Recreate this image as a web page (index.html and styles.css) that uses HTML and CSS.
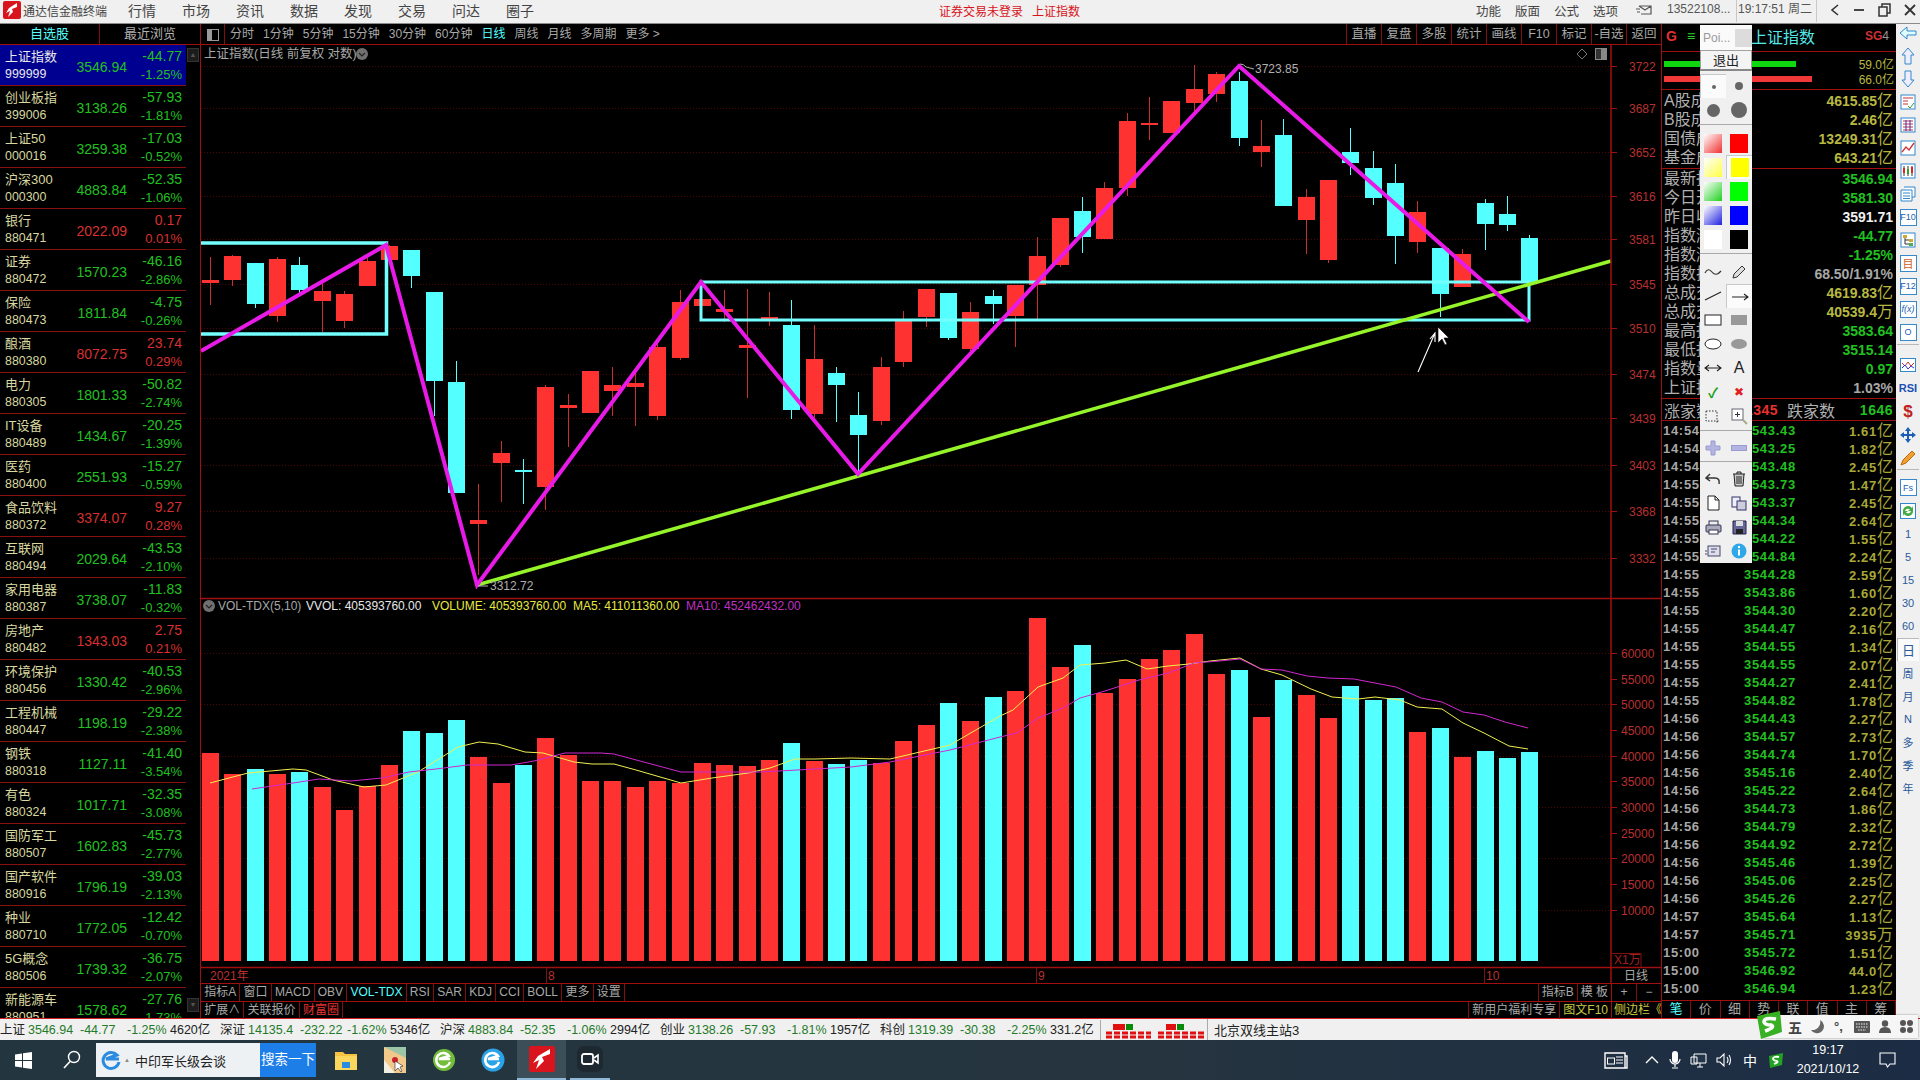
FILE: index.html
```html
<!DOCTYPE html>
<html lang="zh-CN">
<head>
    <meta charset="UTF-8">
    <title>通达信金融终端</title>
    <link rel="stylesheet" href="styles.css">
</head>
<body>
<div class="app">

    <!-- Title bar -->
    <div class="titlebar">
        <svg class="logo" width="18" height="18" viewBox="0 0 18 18"><rect width="18" height="18" rx="2" fill="#d8141c"/><path d="M14 2 L6 7 L3 12 L7 10 L5 16 L10 11 L9 8 L14 6 Z" fill="#fff"/></svg>
        <span class="app-name">通达信金融终端</span>
        <div class="menu">
            <span>行情</span><span>市场</span><span>资讯</span><span>数据</span><span>发现</span><span>交易</span><span>问达</span><span>圈子</span>
        </div>
        <div class="login-note"><span>证券交易未登录</span><span>上证指数</span></div>
        <div class="menu menu-right">
            <span>功能</span><span>版面</span><span>公式</span><span>选项</span>
        </div>
        <svg class="mail" width="16" height="12" viewBox="0 0 16 12"><path d="M3 2 H15 V10 H5 M3 2 L9 6 L15 2 M0 5 H4 M1 8 H4" fill="none" stroke="#555" stroke-width="1.2"/></svg>
        <span class="account">13522108...</span>
        <span class="clock">19:17:51 周二</span>
        <div class="win-btns">
            <svg width="10" height="14" viewBox="0 0 10 14"><path d="M8 2 L2 7 L8 12" fill="none" stroke="#333" stroke-width="1.6"/></svg>
            <svg width="12" height="14" viewBox="0 0 12 14"><path d="M1 7 H11" stroke="#333" stroke-width="1.8"/></svg>
            <svg width="13" height="14" viewBox="0 0 13 14"><path d="M1 4 H9 V13 H1 Z M4 4 V1 H12 V10 H9" fill="none" stroke="#333" stroke-width="1.5"/></svg>
            <svg width="12" height="14" viewBox="0 0 12 14"><path d="M1 2 L11 12 M11 2 L1 12" stroke="#333" stroke-width="1.8"/></svg>
        </div>
    </div>

    <div class="main">

        <!-- Stock list -->
        <div class="left">
            <div class="left-tabs"><span class="active">自选股</span><span>最近浏览</span></div>
            <div class="left-body">
                <div class="stock-list" id="stock-list"></div>
                <div class="scrollbar">
                    <div class="scroll-btn">▲</div>
                    <div class="scroll-btn">▼</div>
                </div>
            </div>
        </div>

        <!-- Chart area -->
        <div class="center">
            <div class="toolbar">
                <div class="period">
                    <span class="panel-icon"><svg width="12" height="12" viewBox="0 0 12 12"><rect x="0.5" y="0.5" width="11" height="11" fill="none" stroke="#999"/><rect x="1" y="1" width="4" height="10" fill="#999"/></svg></span>
                    <span>分时</span><span>1分钟</span><span>5分钟</span><span>15分钟</span><span>30分钟</span><span>60分钟</span><span class="active">日线</span><span>周线</span><span>月线</span><span>多周期</span><span>更多 &gt;</span>
                </div>
                <div class="tools">
                    <span>直播</span><span>复盘</span><span>多股</span><span>统计</span><span>画线</span><span>F10</span><span>标记</span><span>-自选</span><span>返回</span>
                </div>
            </div>

            <svg class="chart" id="chart" width="1460" height="938" viewBox="201 45 1460 938"></svg>

            <div class="tab-row">
                <div class="tab-group">
                    <span>指标A</span><span>窗口</span><span>MACD</span><span>OBV</span><span class="active">VOL-TDX</span><span>RSI</span><span>SAR</span><span>KDJ</span><span>CCI</span><span>BOLL</span><span>更多</span><span>设置</span>
                </div>
                <div class="tab-end">
                    <span>指标B</span><span>模 板</span>
                    <div class="zoom-btns"><span>+</span><span>−</span></div>
                </div>
            </div>
            <div class="tab-row tab-row-last">
                <div class="tab-group">
                    <span>扩展∧</span><span>关联报价</span><span class="hot">财富圈</span>
                </div>
                <div class="tab-end promo">
                    <span>新用户福利专享</span><span class="gold">图文F10</span><span class="gold side-toggle">侧边栏《</span>
                </div>
            </div>
        </div>

        <!-- Quote panel -->
        <div class="right">
            <div class="quote-head">
                <span class="g">G</span><span class="bars">≡</span><span class="quote-name">上证指数</span><span class="sg">SG<i>4</i></span>
            </div>
            <div class="flow">
                <div class="flow-row"><div class="flow-bar green"></div><span>59.0亿</span></div>
                <div class="flow-row"><div class="flow-bar red"></div><span>66.0亿</span></div>
            </div>
            <div class="quote-rows" id="quote-a"></div>
            <div class="quote-rows quote-rows-b" id="quote-b"></div>
            <div class="updown">
                <span>涨家数</span><b class="up">1345</b><span>跌家数</span><b class="down">1646</b>
            </div>
            <div class="ticks" id="ticks"></div>
            <div class="right-tabs">
                <span class="active">笔</span><span>价</span><span>细</span><span>势</span><span>联</span><span>值</span><span>主</span><span>筹</span>
            </div>
        </div>

        <!-- Side icon strip -->
        <div class="side">
            <div class="side-list">
                <span><svg width="18" height="14" viewBox="0 0 18 14"><path d="M8 1 L1 7 L8 13 V9 H17 V5 H8 Z" fill="#dff" stroke="#38c"/></svg></span>
                <span><svg width="14" height="18" viewBox="0 0 14 18"><path d="M7 1 L1 8 H4 V17 H10 V8 H13 Z" fill="#eef" stroke="#38c"/></svg></span>
                <span><svg width="14" height="18" viewBox="0 0 14 18"><path d="M7 17 L1 10 H4 V1 H10 V10 H13 Z" fill="#eef" stroke="#38c"/></svg></span>
                <span><svg width="16" height="16" viewBox="0 0 16 16"><rect x="1" y="1" width="14" height="14" fill="#fff" stroke="#38c"/><path d="M3 4 H13 M3 7 H8 M3 10 H8" stroke="#c33"/><path d="M8 12 L10 14 L14 9" fill="none" stroke="#393"/></svg></span>
                <span><svg width="16" height="16" viewBox="0 0 16 16"><rect x="1" y="1" width="14" height="14" fill="#fff" stroke="#38c"/><path d="M3 4 H13 M3 7 H13 M3 10 H13 M3 13 H13" stroke="#c33"/><path d="M6 3 V14 M10 3 V14" stroke="#33c"/></svg></span>
                <span><svg width="16" height="16" viewBox="0 0 16 16"><rect x="1" y="1" width="14" height="14" fill="#fff" stroke="#38c"/><path d="M2 12 L6 7 L9 10 L14 3" fill="none" stroke="#c33" stroke-width="1.3"/></svg></span>
                <span><svg width="16" height="16" viewBox="0 0 16 16"><rect x="1" y="1" width="14" height="14" fill="#fff" stroke="#38c"/><path d="M4 3 V13 M8 3 V13 M12 3 V13" stroke="#333"/><rect x="3" y="5" width="2" height="5" fill="#d22"/><rect x="7" y="6" width="2" height="5" fill="#2a2"/><rect x="11" y="4" width="2" height="6" fill="#d22"/></svg></span>
                <span><svg width="16" height="16" viewBox="0 0 16 16"><path d="M4 1 H15 V11 H12 M1 4 H12 V15 H1 Z" fill="#fff" stroke="#38c"/><path d="M3 7 H10 M3 10 H10 M3 12.5 H10" stroke="#38c"/></svg></span>
                <span class="boxed">F10</span>
                <span><svg width="16" height="16" viewBox="0 0 16 16"><rect x="1" y="1" width="14" height="14" fill="#fff" stroke="#38c"/><rect x="3" y="3" width="4" height="3" fill="#ca3"/><rect x="9" y="7" width="4" height="3" fill="#ca3"/><rect x="9" y="11" width="4" height="3" fill="#5a5"/><path d="M5 6 V12 H9 M5 8 H9" fill="none" stroke="#333"/></svg></span>
                <span class="boxed boxed-red">目</span>
                <span class="boxed">F12</span>
                <span class="boxed boxed-italic">f(x)</span>
                <span class="boxed">O</span>
                <span class="sep sep-a"></span>
                <span><svg width="16" height="14" viewBox="0 0 16 14"><rect x="0.5" y="0.5" width="15" height="13" fill="#fff" stroke="#38c"/><path d="M2 5 L5 8 L8 4 L11 8 L14 5" fill="none" stroke="#c33"/><path d="M2 10 L5 7 L8 11 L11 8 L14 10" fill="none" stroke="#33c"/></svg></span>
                <span class="rsi">RSI</span>
                <span class="dollar">$</span>
                <span><svg width="18" height="18" viewBox="0 0 18 18"><path d="M9 1 L12 5 H10 V8 H13 V6 L17 9 L13 12 V10 H10 V13 H12 L9 17 L6 13 H8 V10 H5 V12 L1 9 L5 6 V8 H8 V5 H6 Z" fill="#1a5fb4"/></svg></span>
                <span><svg width="18" height="18" viewBox="0 0 18 18"><path d="M2 16 L4 11 L13 2 L16 5 L7 14 Z" fill="#f0a030" stroke="#b86a10"/></svg></span>
                <span class="sep sep-b"></span>
                <span class="boxed">Fs</span>
                <span><svg width="16" height="16" viewBox="0 0 16 16"><rect x="0.5" y="0.5" width="15" height="15" fill="#fff" stroke="#38c"/><path d="M3 8 A5 5 0 0 1 12 5 L13 3 V8 H8 L10 6.5 A3 3 0 0 0 5 8 Z M13 8 A5 5 0 0 1 4 11 L3 13 V8 H8 L6 9.5 A3 3 0 0 0 11 8 Z" fill="#4a4"/></svg></span>
                <span class="period-btn">1</span><span class="period-btn">5</span><span class="period-btn">15</span><span class="period-btn">30</span><span class="period-btn">60</span>
                <span class="period-btn period-on">日</span><span class="period-btn">周</span><span class="period-btn">月</span><span class="period-btn">N</span><span class="period-btn">多</span><span class="period-btn">季</span><span class="period-btn">年</span>
            </div>
        </div>

        <!-- Floating drawing palette -->
        <div class="pen">
            <div class="pen-title"><span>Poi...</span><i></i></div>
            <div class="pen-exit">退出</div>
            <div class="pen-grid">
                <span class="pen-on"><b class="dot d1"></b></span><span><b class="dot d2"></b></span>
                <span><b class="dot d3"></b></span><span><b class="dot d4"></b></span>
            </div>
            <div class="pen-sep"></div>
            <div class="pen-grid">
                <span><b class="sw g-red"></b></span><span><b class="sw c-red"></b></span>
                <span><b class="sw g-yel"></b></span><span class="pen-on"><b class="sw c-yel"></b></span>
                <span><b class="sw g-grn"></b></span><span><b class="sw c-grn"></b></span>
                <span><b class="sw g-blu"></b></span><span><b class="sw c-blu"></b></span>
                <span><b class="sw c-wht"></b></span><span><b class="sw c-blk"></b></span>
            </div>
            <div class="pen-sep"></div>
            <div class="pen-grid">
                <span><svg width="18" height="12" viewBox="0 0 18 12"><path d="M1 7 Q4 1 8 6 T17 5" fill="none" stroke="#333" stroke-width="1.2"/></svg></span>
                <span><svg width="16" height="16" viewBox="0 0 16 16"><path d="M2 14 L3 10 L11 2 L14 5 L6 13 Z" fill="#ddd" stroke="#333"/></svg></span>
                <span><svg width="18" height="10" viewBox="0 0 18 10"><path d="M1 9 L17 1" stroke="#222" stroke-width="1.1"/></svg></span>
                <span class="pen-on"><svg width="18" height="10" viewBox="0 0 18 10"><path d="M1 5 H17 M13 2 L17 5 L13 8" fill="none" stroke="#222" stroke-width="1.1"/></svg></span>
                <span><svg width="18" height="12" viewBox="0 0 18 12"><rect x="1" y="1" width="16" height="10" fill="#fff" stroke="#222"/></svg></span>
                <span><b class="filled"></b></span>
                <span><svg width="18" height="12" viewBox="0 0 18 12"><ellipse cx="9" cy="6" rx="8" ry="5" fill="#fff" stroke="#222"/></svg></span>
                <span><b class="filled round"></b></span>
                <span><svg width="18" height="10" viewBox="0 0 18 10"><path d="M1 5 H17 M5 2 L1 5 L5 8 M13 2 L17 5 L13 8" fill="none" stroke="#222" stroke-width="1.1"/></svg></span>
                <span class="pen-a">A</span>
                <span class="ok">✓</span>
                <span class="no">✖</span>
                <span><svg width="18" height="18" viewBox="0 0 18 18"><path d="M2 4 H13 V16 M2 4 V14 H16" fill="none" stroke="#333" stroke-dasharray="1.5 1.5"/></svg></span>
                <span><svg width="18" height="18" viewBox="0 0 18 18"><rect x="2" y="2" width="11" height="11" fill="#fff" stroke="#667"/><path d="M7.5 5 V10 M5 7.5 H10" stroke="#333"/><path d="M13 13 L17 17" stroke="#aa8" stroke-width="2"/></svg></span>
            </div>
            <div class="pen-sep"></div>
            <div class="pen-grid pen-grid-short">
                <span><svg width="16" height="16" viewBox="0 0 16 16"><path d="M6 1 H10 V6 H15 V10 H10 V15 H6 V10 H1 V6 H6 Z" fill="#b4b4e0" stroke="#9a9ad0"/></svg></span>
                <span><svg width="16" height="6" viewBox="0 0 16 6"><rect x="0.5" y="0.5" width="15" height="5" fill="#b4b4e0" stroke="#9a9ad0"/></svg></span>
            </div>
            <div class="pen-sep pen-sep-last"></div>
            <div class="pen-grid">
                <span><svg width="16" height="12" viewBox="0 0 16 12"><path d="M5 1 L1 5 L5 8 M1 5 H10 Q15 5 14 11" fill="none" stroke="#333" stroke-width="1.4"/></svg></span>
                <span><svg width="14" height="16" viewBox="0 0 14 16"><path d="M1 3 H13 M5 3 V1 H9 V3 M2 3 L3 15 H11 L12 3 M5 5 V13 M7 5 V13 M9 5 V13" fill="#ccc" stroke="#222"/></svg></span>
                <span><svg width="13" height="16" viewBox="0 0 13 16"><path d="M1 1 H8 L12 5 V15 H1 Z M8 1 V5 H12" fill="#fff" stroke="#222"/></svg></span>
                <span><svg width="16" height="15" viewBox="0 0 16 15"><rect x="1" y="1" width="8" height="10" fill="#eef" stroke="#336"/><rect x="6" y="5" width="9" height="9" fill="#ccd" stroke="#336"/></svg></span>
                <span><svg width="17" height="15" viewBox="0 0 17 15"><rect x="4" y="1" width="9" height="5" fill="#eee" stroke="#335"/><rect x="1" y="5" width="15" height="7" rx="1" fill="#aab" stroke="#335"/><rect x="4" y="10" width="9" height="4" fill="#fff" stroke="#335"/></svg></span>
                <span><svg width="15" height="15" viewBox="0 0 15 15"><path d="M1 1 H14 V14 H1 Z" fill="#669" stroke="#224"/><rect x="4" y="1" width="7" height="5" fill="#ddd"/><rect x="4" y="9" width="7" height="5" fill="#222"/></svg></span>
                <span><svg width="16" height="12" viewBox="0 0 16 12"><rect x="3" y="1" width="12" height="10" fill="#dde" stroke="#446"/><path d="M6 4 H12 M6 7 H10 M0 9 H2 M0 6 H2" stroke="#446"/></svg></span>
                <span><svg width="16" height="16" viewBox="0 0 16 16"><circle cx="8" cy="8" r="7.5" fill="#2fa8e8"/><rect x="7" y="3" width="2" height="2" fill="#fff"/><rect x="7" y="6.5" width="2" height="6" fill="#fff"/></svg></span>
            </div>
        </div>
    </div>

    <!-- Index status bar -->
    <div class="statusbar">
        <div class="idx"><span>上证</span><em>3546.94</em><em>-44.77</em><em>-1.25%</em><span>4620亿</span></div>
        <div class="idx"><span>深证</span><em>14135.4</em><em>-232.22</em><em>-1.62%</em><span>5346亿</span></div>
        <div class="idx"><span>沪深</span><em>4883.84</em><em>-52.35</em><em>-1.06%</em><span>2994亿</span></div>
        <div class="idx"><span>创业</span><em>3138.26</em><em>-57.93</em><em>-1.81%</em><span>1957亿</span></div>
        <div class="idx idx-last"><span>科创</span><em>1319.39</em><em>-30.38</em><em>-2.25%</em><span>331.2亿</span></div>
        <div class="signal">
            <svg width="102" height="18" viewBox="0 0 102 18">
                <rect x="8" y="3" width="12" height="6" fill="#e01010"/><rect x="21" y="3" width="7" height="6" fill="#0a8a0a"/>
                <rect x="61" y="3" width="10" height="6" fill="#e01010"/><rect x="72" y="3" width="7" height="6" fill="#0a8a0a"/>
                <path d="M1 12 H46 M1 16 H46 M53 12 H100 M53 16 H100" stroke="#e01010" stroke-width="3" stroke-dasharray="6 2"/>
            </svg>
        </div>
        <span class="server">北京双线主站3</span>
    </div>

    <!-- Windows taskbar -->
    <div class="taskbar">
        <div class="task-left">
            <svg class="task-start" width="17" height="17" viewBox="0 0 17 17"><path d="M0 2.5 L7 1.5 V8 H0 Z M8 1.3 L17 0 V8 H8 Z M0 9 H7 V15.5 L0 14.5 Z M8 9 H17 V17 L8 15.7 Z" fill="#fff"/></svg>
            <svg class="task-search" width="18" height="20" viewBox="0 0 18 20"><circle cx="11" cy="7" r="5.5" fill="none" stroke="#fff" stroke-width="1.4"/><path d="M7 11.5 L1 18" stroke="#fff" stroke-width="1.6"/></svg>
            <div class="searchbox">
                <svg width="20" height="22" viewBox="0 0 20 22"><path d="M18 13 A8 8 0 1 1 16 6 L5 10 H18" fill="none" stroke="#2a8be0" stroke-width="3"/></svg>
                <i>▲</i>
                <span>中印军长级会谈</span>
                <b>搜索一下</b>
            </div>
            <div class="task-apps">
                <span><svg width="24" height="22" viewBox="0 0 24 22"><path d="M1 3 H9 L11 5 H23 V21 H1 Z" fill="#f5c242"/><rect x="1" y="7" width="22" height="14" fill="#fbd75e"/><rect x="8" y="13" width="8" height="6" fill="#2a8be0"/></svg></span>
                <span><svg width="24" height="28" viewBox="0 0 24 28"><path d="M1 1 H23 V27 H1 Z" fill="#f3c98b"/><path d="M1 1 L23 12 V1 Z" fill="#9bc7a6"/><path d="M1 14 L12 27 H1 Z" fill="#f0efe0"/><circle cx="12" cy="14" r="3" fill="#c7252b"/><path d="M12 15 V25 L15 22 L18 26 L19 25 L17 21 L20 20 Z" fill="#fff" stroke="#222" stroke-width="0.6"/></svg></span>
                <span><svg width="24" height="26" viewBox="0 0 24 26"><circle cx="12" cy="13" r="11" fill="#72be38"/><path d="M18 15 A7 7 0 1 1 17 9 L7 12 H18" fill="none" stroke="#fff" stroke-width="2.4"/></svg></span>
                <span><svg width="24" height="26" viewBox="0 0 24 26"><circle cx="12" cy="13" r="11.5" fill="#2aa3e8"/><path d="M18 15 A7 7 0 1 1 17 9 L7 12 H18" fill="none" stroke="#fff" stroke-width="2.6"/></svg></span>
                <span class="task-on"><svg width="26" height="26" viewBox="0 0 26 26"><rect width="26" height="26" rx="2" fill="#d8141c"/><path d="M21 3 L9 10 L4 17 L10 14 L7 23 L15 15 L13 11 L21 8 Z" fill="#fff"/></svg></span>
                <span class="task-open"><svg width="26" height="26" viewBox="0 0 26 26"><rect width="26" height="26" rx="7" fill="#1d2830"/><rect x="5" y="8" width="11" height="10" rx="2" fill="none" stroke="#fff" stroke-width="1.8"/><path d="M17 12 L21 9 V17 L17 14" fill="none" stroke="#fff" stroke-width="1.6"/></svg></span>
            </div>
        </div>
        <div class="tray">
            <svg width="24" height="17" viewBox="0 0 24 17"><path d="M1 1 H21 V16 H1 Z M21 4 H23 V16 H21" fill="none" stroke="#fff" stroke-width="1.4"/><rect x="3.5" y="6" width="7" height="6" fill="none" stroke="#fff"/><path d="M12 5 H19 M12 8 H19 M12 11 H19" stroke="#fff"/></svg>
            <svg class="tray-up" width="14" height="8" viewBox="0 0 14 8"><path d="M1 7 L7 1 L13 7" fill="none" stroke="#fff" stroke-width="1.3"/></svg>
            <svg width="12" height="18" viewBox="0 0 12 18"><rect x="3" y="0" width="6" height="12" rx="3" fill="#fff"/><path d="M1 8 A5 5 0 0 0 11 8 M6 13 V16 M3 17 H9" fill="none" stroke="#fff" stroke-width="1.2"/></svg>
            <svg width="17" height="16" viewBox="0 0 17 16"><path d="M4 2 H16 V11 H4 Z M1 5 H7 V12 H1 Z M7 15 H13 M10 11 V15" fill="#233548" stroke="#fff"/></svg>
            <svg width="17" height="14" viewBox="0 0 17 14"><path d="M1 5 H4 L8 1 V13 L4 9 H1 Z M11 4 Q13 7 11 10 M13 2 Q16 7 13 12" fill="none" stroke="#fff" stroke-width="1.1"/></svg>
            <span class="tray-ime">中</span>
            <svg class="tray-s" width="16" height="15" viewBox="0 0 16 15"><path d="M1 3 L15 0 L14 12 L2 15 Z" fill="#23a323"/><path d="M11 4 Q5 3 5 6 Q6 8 9 8 Q11 9 6 11" fill="none" stroke="#fff" stroke-width="1.8"/></svg>
            <div class="datetime"><span>19:17</span><span>2021/10/12</span></div>
            <svg class="notify" width="17" height="16" viewBox="0 0 17 16"><path d="M1 1 H16 V12 H11 L8.5 15 L7 12 H1 Z" fill="none" stroke="#fff" stroke-width="1.1"/></svg>
        </div>
    </div>

    <!-- IME floating bar -->
    <div class="ime">
        <svg class="ime-logo" width="28" height="28" viewBox="0 0 28 28"><path d="M2 5 L25 0 L27 21 L6 28 Z" fill="#37b024"/><path d="M21 8 Q9 6 9 11 Q10 14 16 14 Q21 16 10 20" fill="none" stroke="#fff" stroke-width="3.6"/></svg>
        <span class="ime-wu">五</span>
        <svg width="14" height="14" viewBox="0 0 14 14"><path d="M9 0 A7 7 0 1 1 0 10 A8 8 0 0 0 9 0 Z" fill="#666"/></svg>
        <span class="ime-punc">°,</span>
        <svg width="16" height="12" viewBox="0 0 16 12"><rect width="16" height="12" rx="1" fill="#555"/><path d="M2 3 H14 M2 6 H14 M4 9 H12" stroke="#eee" stroke-dasharray="1.5 1"/></svg>
        <svg width="12" height="13" viewBox="0 0 12 13"><circle cx="6" cy="3.5" r="3.2" fill="#555"/><path d="M0 13 Q0 7 6 7 Q12 7 12 13 Z" fill="#555"/></svg>
        <svg width="13" height="13" viewBox="0 0 13 13"><circle cx="3" cy="3" r="3" fill="#555"/><circle cx="10" cy="3" r="3" fill="#555"/><circle cx="3" cy="10" r="3" fill="#555"/><circle cx="10" cy="10" r="3" fill="#555"/></svg>
    </div>
</div>
<script src="app.js"></script>
</body>
</html>
```
FILE: styles.css
```css
* {
    box-sizing: border-box;
}

html, body {
    margin: 0;
    padding: 0;
    background-color: #000;
}

body {
    font-family: 'Liberation Sans', 'Noto Sans CJK SC', sans-serif;
    font-size: 12px;
    color: #b8b8b8;
    overflow: hidden;
}

i, em {
    font-style: normal;
}

.app {
    position: relative;
    width: 1920px;
    height: 1080px;
    display: flex;
    flex-direction: column;
    overflow: hidden;
}

/* Title bar */
.titlebar {
    height: 24px;
    flex: none;
    display: flex;
    align-items: center;
    background-color: #f0f0f0;
    border-bottom: 1px solid #8c8c8c;
    color: #444;
    padding-left: 3px;
    padding-bottom: 3px;
}

.app-name {
    margin-left: 2px;
    width: 105px;
    font-size: 12px;
}

.menu {
    display: flex;
    gap: 26px;
    font-size: 14px;
}

.login-note {
    margin-left: 405px;
    width: 537px;
    display: flex;
    gap: 9px;
    color: #d8141c;
    font-size: 12px;
}

.menu-right {
    gap: 14px;
    font-size: 12.5px;
    width: 149px;
}

.mail {
    margin-left: 11px;
}

.account {
    margin-left: 15px;
    width: 70px;
    color: #555;
    font-size: 12px;
    border-right: 1px solid #c8c8c8;
    height: 23px;
    line-height: 20px;
}

.clock {
    width: 80px;
    padding-left: 1px;
    color: #555;
    font-size: 12px;
    border-right: 1px solid #c8c8c8;
    height: 23px;
    line-height: 20px;
    white-space: nowrap;
    overflow: hidden;
}

.win-btns {
    display: flex;
    align-items: center;
    gap: 13px;
    margin-left: 13px;
}

/* Main row */
.main {
    position: relative;
    height: 995px;
    flex: none;
    display: flex;
    background-color: #000;
    border-bottom: 1px solid #d02020;
}

/* Left stock list */
.left {
    width: 201px;
    flex: none;
    display: flex;
    flex-direction: column;
    border-right: 1px solid #a01010;
}

.left-tabs {
    height: 21px;
    flex: none;
    display: flex;
    border-bottom: 1px solid #a01010;
    font-size: 13px;
    line-height: 20px;
}

.left-tabs span {
    flex: 1;
    text-align: center;
    color: #b0b0b0;
}

.left-tabs span:first-child {
    border-right: 1px solid #801010;
    flex: none;
    width: 100px;
}

.left-tabs .active {
    color: #54ffff;
}

.left-body {
    flex: 1;
    display: flex;
    min-height: 0;
}

.stock-list {
    width: 186px;
    flex: none;
    overflow: hidden;
}

.stock-row {
    height: 41px;
    display: flex;
    border-bottom: 1px solid #8a1010;
    padding: 3px 4px 0 5px;
}

.stock-row.selected {
    background-color: #000090;
}

.stock-row.selected .name,
.stock-row.selected .code {
    color: #e8e8e8;
}

.stock-id {
    width: 64px;
    flex: none;
    overflow: hidden;
    white-space: nowrap;
}

.name {
    height: 18px;
    line-height: 17px;
    font-size: 13px;
    color: #d8d8a0;
}

.code {
    height: 17px;
    line-height: 17px;
    font-size: 12.4px;
    color: #d8d8a0;
}

.price {
    width: 58px;
    flex: none;
    text-align: right;
    font-size: 14px;
    line-height: 39px;
    height: 37px;
}

.change {
    flex: 1;
    text-align: right;
}

.chg {
    height: 18px;
    line-height: 17px;
    font-size: 14px;
}

.pct {
    height: 17px;
    line-height: 17px;
    font-size: 13px;
}

.rise {
    color: #d83030;
}

.fall {
    color: #20c020;
}

.scrollbar {
    flex: 1;
    display: flex;
    flex-direction: column;
    justify-content: space-between;
    align-items: center;
    padding: 3px 0 6px;
}

.scroll-btn {
    width: 12px;
    height: 14px;
    background-color: #1c1c1c;
    border: 1px solid #333;
    color: #555;
    font-size: 7px;
    line-height: 12px;
    text-align: center;
}

/* Center column */
.center {
    width: 1461px;
    flex: none;
    display: flex;
    flex-direction: column;
    border-right: 1px solid #a01010;
}

.toolbar {
    height: 21px;
    flex: none;
    display: flex;
    justify-content: space-between;
    border-bottom: 1px solid #a01010;
    line-height: 20px;
}

.period {
    display: flex;
    gap: 9px;
    font-size: 12px;
    color: #a8a8a8;
}

.period .panel-icon {
    width: 24px;
    margin-right: -4px;
    padding: 3px 0 0 6px;
    border-right: 1px solid #801010;
    height: 20px;
}

.period .active {
    color: #54ffff;
}

.tools {
    display: flex;
    font-size: 12.5px;
    color: #a8a8a8;
    margin-right: 0;
}

.tools span {
    width: 35px;
    text-align: center;
    border-left: 1px solid #801010;
}

.chart {
    display: block;
    flex: none;
    background-color: #000;
}

.chart text {
    font-family: 'Liberation Sans', 'Noto Sans CJK SC', sans-serif;
}

.tab-row {
    height: 18px;
    flex: none;
    display: flex;
    justify-content: space-between;
    border-top: 1px solid #a01010;
    line-height: 16px;
}

.tab-row-last {
    height: 18px;
}

.tab-group {
    display: flex;
}

.tab-group span {
    padding: 0 3.2px;
    border-right: 1px solid #801010;
    color: #a8a8a8;
}

.tab-group .active {
    color: #54ffff;
}

.tab-group .hot {
    color: #e83030;
}

.tab-end {
    display: flex;
    align-items: stretch;
    color: #a8a8a8;
}

.tab-end > span {
    padding: 0 3px;
    border-left: 1px solid #801010;
}

.zoom-btns {
    display: flex;
    width: 50px;
    border-left: 1px solid #a01010;
}

.zoom-btns span {
    flex: 1;
    text-align: center;
}

.zoom-btns span + span {
    border-left: 1px solid #801010;
}

.promo .gold {
    color: #c8c840;
}

.promo .side-toggle {
    width: 50px;
    padding: 0 0 0 2px;
    border-left: 1px solid #a01010;
    white-space: nowrap;
    overflow: hidden;
}

/* Right quote panel */
.right {
    width: 234px;
    flex: none;
    display: flex;
    flex-direction: column;
    font-size: 14px;
}

.quote-head {
    height: 28px;
    flex: none;
    display: flex;
    align-items: center;
    padding: 0 0 3px 4px;
    border-bottom: 1px solid #a01010;
}

.quote-head .g {
    color: #e03030;
    font-weight: bold;
    font-size: 14px;
    width: 21px;
}

.quote-head .bars {
    color: #2ad02a;
    font-size: 14px;
    width: 64px;
}

.quote-name {
    color: #54e8e8;
    font-size: 16px;
    width: 114px;
    padding-left: 0;
}

.sg {
    color: #d03030;
    font-weight: bold;
    font-size: 12px;
}

.sg i {
    color: #999;
    font-weight: normal;
}

.flow {
    height: 38px;
    flex: none;
    padding-top: 4px;
    border-bottom: 1px solid #a01010;
}

.flow-row {
    height: 15px;
    display: flex;
    align-items: center;
    justify-content: space-between;
    padding: 0 2px;
    color: #b8b840;
    font-size: 12px;
}

.flow-bar {
    height: 6px;
}

.flow-bar.green {
    width: 132px;
    background-color: #10d810;
}

.flow-bar.red {
    width: 148px;
    background-color: #f03838;
}

.quote-rows {
    flex: none;
    padding: 1px 3px 1px 2px;
    border-bottom: 1px solid #a01010;
}

.quote-rows-b {
    padding-top: 0;
}

.quote-row {
    height: 19px;
    display: flex;
    align-items: center;
    justify-content: space-between;
}

.quote-row label {
    font-size: 16px;
    color: #b0b0b0;
    line-height: 19px;
}

.quote-row b {
    font-size: 14px;
    line-height: 19px;
}

.quote-row u {
    text-decoration: none;
    font-size: 16px;
    font-weight: normal;
}

.olive {
    color: #b8b840;
}

.lime {
    color: #20c020;
}

.white {
    color: #f0f0f0;
}

.grey {
    color: #a8a8a8;
}

.updown {
    height: 22px;
    flex: none;
    display: flex;
    align-items: center;
    padding: 0 3px 0 2px;
    font-size: 16px;
    color: #b0b0b0;
    border-bottom: 1px solid #a01010;
}

.updown .up {
    font-size: 14px;
    color: #e83030;
    margin-left: 33px;
    width: 42px;
    letter-spacing: 0.5px;
}

.updown .down {
    font-size: 14px;
    color: #20c020;
    margin-left: auto;
    letter-spacing: 0.5px;
}

.ticks {
    flex: 1;
    overflow: hidden;
    padding-top: 1px;
}

.tick {
    height: 18px;
    line-height: 18px;
    display: flex;
    padding-left: 1px;
    font-size: 13px;
    font-weight: bold;
    letter-spacing: 0.7px;
}

.tick .t {
    width: 81px;
    color: #a8a8a8;
}

.tick .p {
    width: 60px;
    color: #20c020;
}

.tick .v {
    width: 89px;
    text-align: right;
    color: #a8a838;
}

.tick u {
    text-decoration: none;
    font-size: 16px;
    font-weight: normal;
    letter-spacing: 0;
}

.right-tabs {
    height: 18px;
    flex: none;
    display: flex;
    border-top: 1px solid #a01010;
    line-height: 16px;
    font-size: 13px;
    color: #a8a8a8;
}

.right-tabs span {
    flex: 1;
    text-align: center;
    border-right: 1px solid #801010;
}

.right-tabs .active {
    color: #54ffff;
}

/* Side icon strip */
.side {
    flex: 1;
    background-color: #f0f0f0;
    overflow: hidden;
}

.side-list {
    display: flex;
    flex-direction: column;
    align-items: center;
    margin-top: -3px;
}

.side-list > span {
    height: 23.1px;
    display: flex;
    align-items: center;
    justify-content: center;
}

.side-list .boxed {
    width: 17px;
    height: 17px;
    margin: 3px 0;
    border: 1px solid #3888cc;
    background-color: #fff;
    color: #1a5fb4;
    font-size: 9px;
}

.side-list .boxed-red {
    color: #d06020;
    font-size: 11px;
}

.side-list .boxed-italic {
    font-style: italic;
}

.side-list .sep {
    width: 22px;
    border-top: 1px solid #b8b8b8;
}

.side-list .sep-a {
    height: 10px;
    margin-top: 0;
}

.side-list .sep-b {
    height: 7px;
    margin-top: 0;
}

.side-list .rsi {
    color: #1a4fb4;
    font-weight: bold;
    font-size: 11px;
}

.side-list .dollar {
    color: #c02020;
    font-weight: bold;
    font-size: 17px;
}

.side-list .period-btn {
    width: 22px;
    color: #2a5a9a;
    font-size: 11px;
}

.side-list .period-on {
    border-left: 1px solid #bbb;
    border-top: 1px solid #bbb;
    background-color: #fafafa;
    font-size: 13px;
}

/* Floating drawing palette */
.pen {
    position: absolute;
    left: 1700px;
    top: 1px;
    width: 52px;
    height: 538px;
    background-color: #f0f0f0;
}

.pen-title {
    height: 25px;
    display: flex;
    align-items: center;
    padding-left: 3px;
    background-color: #fafafa;
    color: #999;
}

.pen-title span {
    width: 32px;
}

.pen-title i {
    width: 17px;
    height: 18px;
    background-color: #dcdcdc;
}

.pen-exit {
    height: 21px;
    line-height: 19px;
    text-align: center;
    background-color: #f4f4f4;
    border: 1px solid #a0a0a0;
    border-bottom: 2px solid #888;
    color: #222;
    font-size: 13px;
    margin-bottom: 2px;
}

.pen-grid {
    display: grid;
    grid-template-columns: 26px 26px;
    grid-auto-rows: 24px;
    padding-top: 1px;
}

.pen-grid span {
    display: flex;
    align-items: center;
    justify-content: center;
}

.pen-grid .pen-on {
    background-color: #fbfbfb;
    border-left: 1px solid #c8c8c8;
    border-top: 1px solid #c8c8c8;
}

.pen-grid-short {
    grid-auto-rows: 22px;
}

.pen-sep {
    height: 6px;
    margin-top: 2px;
    border-top: 1px solid #aaa;
}

.pen-sep-last {
    height: 5px;
}

.dot {
    display: block;
    border-radius: 50%;
    background-color: #666;
}

.d1 { width: 4px; height: 4px; }
.d2 { width: 8px; height: 8px; }
.d3 { width: 13px; height: 13px; }
.d4 { width: 16px; height: 16px; }

.sw {
    display: block;
    width: 18px;
    height: 19px;
}

.g-red { background: linear-gradient(135deg, #fff, #f03030); }
.c-red { background-color: #ff0000; }
.g-yel { background: linear-gradient(135deg, #fff, #ffff40); }
.c-yel { background-color: #ffff00; }
.g-grn { background: linear-gradient(135deg, #fff, #20d020); }
.c-grn { background-color: #00ff00; }
.g-blu { background: linear-gradient(135deg, #fff, #2020e0); }
.c-blu { background-color: #0000ff; }
.c-wht { background-color: #fff; }
.c-blk { background-color: #000; }

.filled {
    display: block;
    width: 16px;
    height: 10px;
    background-color: #999;
}

.filled.round {
    border-radius: 50%;
}

.pen-grid .pen-a {
    color: #222;
    font-size: 16px;
}

.pen-grid .ok {
    color: #20a020;
    font-size: 14px;
    font-weight: bold;
}

.pen-grid .no {
    color: #e02020;
    font-size: 12px;
}

/* Status bar */
.statusbar {
    height: 21px;
    flex: none;
    display: flex;
    align-items: center;
    background-color: #f0f0f0;
    color: #222;
    font-size: 12.5px;
}

.idx {
    width: 220px;
    flex: none;
    display: grid;
    grid-template-columns: 28px 52px 47px 43px 1fr;
    white-space: nowrap;
    line-height: 20px;
}

.idx em {
    color: #1f7a2a;
}

.idx-last {
    width: 221px;
    border-right: 1px solid #aaa;
}

.signal {
    width: 107px;
    height: 21px;
    flex: none;
    padding: 2px 0 0 4px;
    border-right: 1px solid #aaa;
}

.server {
    margin-left: 6px;
    font-size: 13px;
}

/* Taskbar */
.taskbar {
    height: 40px;
    flex: none;
    display: flex;
    justify-content: space-between;
    align-items: stretch;
    background: linear-gradient(90deg, #233640, #25343f 60%, #1c2c44);
}

.task-left {
    display: flex;
    align-items: center;
}

.task-start {
    margin-left: 15px;
}

.task-search {
    margin-left: 31px;
}

.searchbox {
    margin-left: 15px;
    width: 220px;
    height: 34px;
    display: flex;
    align-items: center;
    background-color: #eef1f3;
    color: #222;
    font-size: 13px;
    padding-left: 5px;
}

.searchbox i {
    color: #888;
    font-size: 6px;
    margin: 0 5px 0 3px;
}

.searchbox span {
    width: 91px;
    white-space: nowrap;
}

.searchbox b {
    margin-left: auto;
    width: 56px;
    height: 34px;
    line-height: 34px;
    text-align: center;
    background-color: #1e7ee8;
    color: #fff;
    font-weight: normal;
    font-size: 13.5px;
}

.task-apps {
    display: flex;
    height: 40px;
    margin-left: 5px;
}

.task-apps span {
    width: 49px;
    height: 40px;
    display: flex;
    align-items: center;
    justify-content: center;
}

.task-apps .task-on {
    background-color: #3c4e58;
    border-bottom: 2px solid #8fb8d8;
}

.task-apps .task-open {
    position: relative;
    border-bottom: 2px solid #8fb8d8;
    width: 40px;
    margin-left: 4px;
}

.tray {
    display: flex;
    align-items: center;
    padding-right: 24px;
    color: #fff;
}

.tray svg {
    margin-right: 9px;
}

.tray .tray-up {
    margin: 0 10px 0 8px;
}

.tray .tray-s {
    margin-right: 0;
}

.tray-ime {
    font-size: 14px;
    margin-right: 11px;
    margin-left: 1px;
}

.datetime {
    width: 88px;
    display: flex;
    flex-direction: column;
    align-items: center;
    font-size: 12.5px;
    line-height: 19px;
}

.tray .notify {
    margin: 0 0 0 7px;
}

/* IME floating bar */
.ime {
    position: absolute;
    left: 1764px;
    top: 1015px;
    width: 154px;
    height: 23px;
    display: flex;
    align-items: center;
    gap: 9px;
    padding-left: 24px;
    background-color: #f6f6f6;
    box-shadow: 0 0 2px rgba(0, 0, 0, 0.4);
    color: #444;
}

.ime-logo {
    position: absolute;
    left: -9px;
    top: -4px;
}

.ime-wu {
    font-size: 14px;
    font-weight: bold;
}

.ime-punc {
    font-size: 13px;
    font-weight: bold;
    width: 11px;
}
```
FILE: app.js
```js
// Watchlist rows
const stocks = [
    ['上证指数', '999999', '3546.94', '-44.77', '-1.25%'],
    ['创业板指', '399006', '3138.26', '-57.93', '-1.81%'],
    ['上证50', '000016', '3259.38', '-17.03', '-0.52%'],
    ['沪深300', '000300', '4883.84', '-52.35', '-1.06%'],
    ['银行', '880471', '2022.09', '0.17', '0.01%'],
    ['证券', '880472', '1570.23', '-46.16', '-2.86%'],
    ['保险', '880473', '1811.84', '-4.75', '-0.26%'],
    ['酿酒', '880380', '8072.75', '23.74', '0.29%'],
    ['电力', '880305', '1801.33', '-50.82', '-2.74%'],
    ['IT设备', '880489', '1434.67', '-20.25', '-1.39%'],
    ['医药', '880400', '2551.93', '-15.27', '-0.59%'],
    ['食品饮料', '880372', '3374.07', '9.27', '0.28%'],
    ['互联网', '880494', '2029.64', '-43.53', '-2.10%'],
    ['家用电器', '880387', '3738.07', '-11.83', '-0.32%'],
    ['房地产', '880482', '1343.03', '2.75', '0.21%'],
    ['环境保护', '880456', '1330.42', '-40.53', '-2.96%'],
    ['工程机械', '880447', '1198.19', '-29.22', '-2.38%'],
    ['钢铁', '880318', '1127.11', '-41.40', '-3.54%'],
    ['有色', '880324', '1017.71', '-32.35', '-3.08%'],
    ['国防军工', '880507', '1602.83', '-45.73', '-2.77%'],
    ['国产软件', '880916', '1796.19', '-39.03', '-2.13%'],
    ['种业', '880710', '1772.05', '-12.42', '-0.70%'],
    ['5G概念', '880506', '1739.32', '-36.75', '-2.07%'],
    ['新能源车', '880951', '1578.62', '-27.76', '-1.73%']
];

document.getElementById('stock-list').innerHTML = stocks.map((s, i) => {
    const cls = s[3][0] === '-' ? 'fall' : 'rise';
    return `<div class="stock-row ${i === 0 ? 'selected' : ''}">
        <div class="stock-id"><div class="name">${s[0]}</div><div class="code">${s[1]}</div></div>
        <div class="price ${cls}">${s[2]}</div>
        <div class="change ${cls}"><div class="chg">${s[3]}</div><div class="pct">${s[4]}</div></div>
    </div>`;
}).join('');

// Quote panel
const row = (label, value, cls, unit) =>
    `<div class="quote-row"><label>${label}</label><b class="${cls}">${value}<u>${unit || ''}</u></b></div>`;

document.getElementById('quote-a').innerHTML = [
    row('A股成交', '4615.85', 'olive', '亿'),
    row('B股成交', '2.46', 'olive', '亿'),
    row('国债成交', '13249.31', 'olive', '亿'),
    row('基金成交', '643.21', 'olive', '亿')
].join('');

document.getElementById('quote-b').innerHTML = [
    row('最新指数', '3546.94', 'lime'),
    row('今日开盘', '3581.30', 'lime'),
    row('昨日收盘', '3591.71', 'white'),
    row('指数涨跌', '-44.77', 'lime'),
    row('指数涨幅', '-1.25%', 'lime'),
    row('指数振幅', '68.50/1.91%', 'grey'),
    row('总成交额', '4619.83', 'olive', '亿'),
    row('总成交量', '40539.4', 'olive', '万'),
    row('最高指数', '3583.64', 'lime'),
    row('最低指数', '3515.14', 'lime'),
    row('指数量比', '0.97', 'lime'),
    row('上证换手', '1.03%', 'grey')
].join('');

// Tick list: time, price, amount
const ticks = [
    ['14:54', '3543.43', '1.61'], ['14:54', '3543.25', '1.82'], ['14:54', '3543.48', '2.45'],
    ['14:55', '3543.73', '1.47'], ['14:55', '3543.37', '2.45'], ['14:55', '3544.34', '2.64'],
    ['14:55', '3544.22', '1.55'], ['14:55', '3544.84', '2.24'], ['14:55', '3544.28', '2.59'],
    ['14:55', '3543.86', '1.60'], ['14:55', '3544.30', '2.20'], ['14:55', '3544.47', '2.16'],
    ['14:55', '3544.55', '1.34'], ['14:55', '3544.55', '2.07'], ['14:55', '3544.27', '2.41'],
    ['14:55', '3544.82', '1.78'], ['14:56', '3544.43', '2.27'], ['14:56', '3544.57', '2.73'],
    ['14:56', '3544.74', '1.70'], ['14:56', '3545.16', '2.40'], ['14:56', '3545.22', '2.64'],
    ['14:56', '3544.73', '1.86'], ['14:56', '3544.79', '2.32'], ['14:56', '3544.92', '2.72'],
    ['14:56', '3545.46', '1.39'], ['14:56', '3545.06', '2.25'], ['14:56', '3545.26', '2.27'],
    ['14:57', '3545.64', '1.13'], ['14:57', '3545.71', '3935', '万'], ['15:00', '3545.72', '1.51'],
    ['15:00', '3546.92', '44.0'], ['15:00', '3546.94', '1.23']
];

document.getElementById('ticks').innerHTML = ticks.map(t =>
    `<div class="tick"><span class="t">${t[0]}</span><span class="p">${t[1]}</span><span class="v">${t[2]}<u>${t[3] || '亿'}</u></span></div>`
).join('');

// Candles: colour, wick top, body top, body bottom, wick bottom (page pixels)
const candles = [
    ['r',257,280,283,305], ['r',255,256,280,286], ['c',263,263,304,308], ['r',257,259,316,322],
    ['c',257,265,290,293], ['r',283,291,301,332], ['r',291,294,321,328], ['r',257,261,286,286],
    ['r',245,246,260,260], ['c',250,250,276,288], ['c',292,292,381,416], ['c',361,382,493,493],
    ['r',484,520,524,575], ['r',441,453,463,502], ['c',459,470,472,504], ['r',385,387,487,510],
    ['r',394,405,408,447], ['r',371,371,413,413], ['r',367,385,391,416], ['r',372,383,387,426],
    ['r',340,347,416,420], ['r',290,302,358,360], ['r',299,299,306,306], ['r',290,309,312,322],
    ['r',289,345,348,398], ['r',292,317,319,326], ['c',300,325,410,419], ['r',325,359,414,422],
    ['c',367,373,385,422], ['c',392,415,435,471], ['r',357,367,421,425], ['r',311,321,362,367],
    ['r',289,289,317,327], ['c',293,293,338,340], ['r',302,312,349,355], ['c',290,296,304,324],
    ['r',285,285,316,347], ['r',237,256,285,319], ['r',218,218,265,267], ['c',197,211,237,253],
    ['r',182,188,239,239], ['r',113,121,188,196], ['r',97,123,125,140], ['r',101,101,133,133],
    ['r',65,89,103,112], ['r',72,74,94,102], ['c',72,81,138,146], ['r',120,146,152,167],
    ['c',119,135,206,206], ['r',189,197,220,254], ['r',180,180,260,263], ['c',128,152,163,175],
    ['c',151,168,198,205], ['c',164,183,236,264], ['r',201,212,242,253], ['c',248,248,294,317],
    ['r',249,254,287,287], ['c',199,203,224,250], ['c',196,214,225,231], ['c',235,238,282,282]
];

// Volume bars: top edge (page pixels); colour comes from the candle
const volTops = [753,774,769,774,772,787,810,786,765,731,733,720,757,783,765,738,755,781,781,787,781,783,763,765,766,760,743,761,764,760,763,741,725,703,721,697,691,618,667,645,693,679,659,650,634,674,670,717,680,695,718,686,700,698,732,728,757,751,758,752];

const ma5 = [[210,783],[248,773],[293,769],[306,770],[333,780],[364,787],[386,785],[418,772],[458,747],[479,742],[498,744],[525,752],[543,753],[574,762],[592,764],[614,764],[636,770],[681,783],[712,778],[748,773],[770,768],[795,759],[815,759],[851,758],[890,759],[950,745],[1000,716],[1013,710],[1038,687],[1063,678],[1080,665],[1105,663],[1126,660],[1147,669],[1168,666],[1189,664],[1210,661],[1240,658],[1261,669],[1282,675],[1311,689],[1332,697],[1358,699],[1375,697],[1400,700],[1417,707],[1442,709],[1463,723],[1484,733],[1509,746],[1528,749]];
const ma10 = [[252,789],[293,783],[319,779],[351,781],[382,778],[409,772],[436,769],[467,765],[511,765],[534,761],[565,753],[601,753],[614,754],[681,772],[712,772],[761,772],[815,769],[851,767],[890,762],[950,750],[1000,737],[1017,733],[1038,718],[1063,708],[1080,698],[1105,691],[1139,680],[1168,673],[1194,663],[1219,661],[1240,659],[1261,669],[1282,670],[1307,676],[1328,678],[1354,679],[1396,687],[1421,698],[1442,702],[1463,712],[1484,715],[1505,722],[1528,728]];

const CYAN = '#54ffff', RED = '#ff3232', GRID = '#4a0606', AXIS = '#a01010', LABEL = '#b83030';
const barX = i => Math.round(202 + 22.36 * i);
const pts = list => list.map(p => p.join(',')).join(' ');

let svg = '';

// Price and volume grid with axis labels
const prices = [[3722,66],[3687,108],[3652,152],[3616,196],[3581,239],[3545,284],[3510,328],[3474,374],[3439,418],[3403,465],[3368,511],[3332,558]];
prices.forEach(p => {
    svg += `<path d="M201 ${p[1]}.5 H1611" stroke="${GRID}" stroke-dasharray="1 2"/><path d="M1611 ${p[1]}.5 H1617" stroke="${AXIS}"/>`;
    svg += `<text x="1629" y="${p[1] + 5}" font-size="12" fill="${LABEL}">${p[0]}</text>`;
});
for (let k = 0; k < 11; k++) {
    const y = Math.round(653 + 25.65 * k);
    const v = 60000 - 5000 * k;
    if (k % 2 === 0) svg += `<path d="M201 ${y}.5 H1611" stroke="${GRID}" stroke-dasharray="1 2"/>`;
    svg += `<path d="M1611 ${y}.5 H1617" stroke="${AXIS}"/><text x="1621" y="${y + 5}" font-size="12" fill="${LABEL}">${v}</text>`;
}

// Candles
candles.forEach((c, i) => {
    const x = barX(i), col = c[0] === 'r' ? RED : CYAN;
    svg += `<rect x="${x + 8}" y="${c[1]}" width="1" height="${c[4] - c[1]}" fill="${c[0] === 'r' ? '#c83030' : col}"/>`;
    svg += `<rect x="${x}" y="${c[2]}" width="17" height="${c[3] - c[2]}" fill="${col}"/>`;
});

// Hand-drawn boxes and trend lines on the price chart
svg += `<path d="M201 243 H386.5 V334 H201" fill="none" stroke="#74ffff" stroke-width="3.5"/>`;
svg += `<rect x="701" y="282" width="828" height="38" fill="none" stroke="#74ffff" stroke-width="3"/>`;
svg += `<path d="M477 585 L1611 261" stroke="#96f52a" stroke-width="3.5"/>`;
svg += `<polyline points="201,351 386,245 477,585 701,282 858,474 1239,66 1529,322" fill="none" stroke="#e81ae8" stroke-width="4"/>`;

// Arrow and mouse pointer
svg += `<path d="M1418 372 L1435 333 M1430 339 L1435 333 L1435 342" fill="none" stroke="#fff" stroke-width="1.1"/>`;
svg += `<path d="M1438 327 V343 L1442 339 L1445 345 L1447 344 L1444 338 L1449 338 Z" fill="#fff" stroke="#000" stroke-width="0.6"/>`;

// Extreme price labels
svg += `<path d="M1240 64 Q1244 64 1246 67 L1254 69" fill="none" stroke="#b0b0b0"/><text x="1255" y="73" font-size="12" fill="#b0b0b0">3723.85</text>`;
svg += `<path d="M478 586 L488 586" stroke="#b0b0b0"/><text x="490" y="590" font-size="12" fill="#b0b0b0">3312.72</text>`;

// Chart titles
const chevron = (cx, cy) => `<circle cx="${cx}" cy="${cy}" r="6" fill="#707070"/><path d="M${cx - 3} ${cy - 1} L${cx} ${cy + 2} L${cx + 3} ${cy - 1}" fill="none" stroke="#222" stroke-width="1.2"/>`;
svg += `<text x="204" y="58" font-size="12.5" fill="#a8a8a8">上证指数(日线 前复权 对数)</text>` + chevron(362, 54);
svg += `<path d="M1582 49 L1587 54 L1582 59 L1577 54 Z" fill="none" stroke="#777"/><rect x="1595.5" y="48.5" width="11" height="11" fill="#333" stroke="#888"/><rect x="1601" y="49" width="5" height="10" fill="#888"/>`;

// Volume panel
svg += `<path d="M201 598.5 H1661" stroke="${AXIS}" stroke-width="1.5"/>`;
svg += chevron(209, 606);
svg += `<text x="218" y="610" font-size="12" fill="#a8a8a8">VOL-TDX(5,10)</text>`;
svg += `<text x="306" y="610" font-size="12" fill="#e8e8e8">VVOL: 405393760.00</text>`;
svg += `<text x="432" y="610" font-size="12" fill="#e8e840">VOLUME: 405393760.00</text>`;
svg += `<text x="573" y="610" font-size="12" fill="#e8e840">MA5: 411011360.00</text>`;
svg += `<text x="686" y="610" font-size="12" fill="#c030c0">MA10: 452462432.00</text>`;

volTops.forEach((top, i) => {
    svg += `<rect x="${barX(i)}" y="${top}" width="17" height="${961 - top}" fill="${candles[i][0] === 'r' ? RED : CYAN}"/>`;
});
svg += `<polyline points="${pts(ma5)}" fill="none" stroke="#f0f050"/>`;
svg += `<polyline points="${pts(ma10)}" fill="none" stroke="#d028d0"/>`;

// Axis lines and date strip
svg += `<path d="M1611 45 V983" stroke="${AXIS}" stroke-width="1.5"/>`;
svg += `<path d="M201 967.5 H1661" stroke="${AXIS}" stroke-width="1.5"/>`;
svg += `<path d="M1611 953.5 H1641 V967" fill="none" stroke="#801010"/><text x="1614" y="964" font-size="12" fill="#a02020">X1万</text>`;
svg += `<text x="210" y="980" font-size="12" fill="${LABEL}">2021年</text>`;
[[546, '8'], [1036, '9'], [1484, '10']].forEach(d => {
    svg += `<path d="M${d[0]}.5 968 V983" stroke="#801010"/><text x="${d[0] + 2}" y="980" font-size="12" fill="${LABEL}">${d[1]}</text>`;
});
svg += `<text x="1636" y="980" font-size="12" fill="#a8a8a8" text-anchor="middle">日线</text>`;

document.getElementById('chart').innerHTML = svg;
```
